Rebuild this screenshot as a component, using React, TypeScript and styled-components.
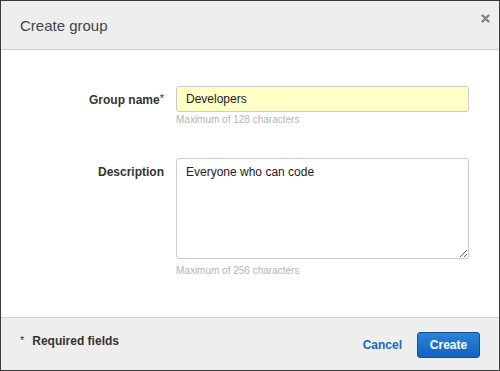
import styled, { createGlobalStyle } from "styled-components";

const GlobalStyle = createGlobalStyle`
	html, body {
		margin: 0;
		padding: 0;
		background: #ffffff;
	}
	body {
		font-family: "Liberation Sans", Arial, sans-serif;
	}
`;

const Dialog = styled.div`
	box-sizing: border-box;
	width: 500px;
	height: 371px;
	border: 1px solid #3a3a3a;
	display: flex;
	flex-direction: column;
	background: #ffffff;
`;

const Header = styled.div`
	box-sizing: border-box;
	height: 49px;
	flex-shrink: 0;
	display: flex;
	justify-content: space-between;
	align-items: flex-start;
	padding: 15px 9px 0 19px;
	background: #eeeeee;
	border-bottom: 1px solid #cccccc;
`;

const Title = styled.h1`
	margin: 0;
	font-size: 15px;
	font-weight: normal;
	color: #444444;
	line-height: 20px;
`;

const CloseButton = styled.button`
	border: none;
	background: transparent;
	padding: 0;
	margin-top: -3px;
	width: 10px;
	height: 10px;
	display: flex;
	align-items: center;
	justify-content: center;
	cursor: pointer;
`;

const Body = styled.div`
	flex: 1;
	display: flex;
	flex-direction: column;
	gap: 33px;
	padding: 36px 31px 0 0;
`;

const Row = styled.div`
	display: grid;
	grid-template-columns: 163px 1fr;
	column-gap: 12px;
`;

const Label = styled.label`
	text-align: right;
	font-size: 12px;
	font-weight: bold;
	color: #333333;
	padding-top: 7px;
`;

const Required = styled.span`
	font-weight: normal;
	font-size: 11px;
	vertical-align: top;
	position: relative;
	top: -1px;
`;

const Field = styled.div`
	display: flex;
	flex-direction: column;
	gap: 2px;
`;

const TextInput = styled.input`
	box-sizing: border-box;
	width: 293px;
	height: 26px;
	padding: 0 9px;
	font-family: inherit;
	font-size: 12px;
	color: #222222;
	background: #ffffc6;
	border: 1px solid #cccccc;
	border-radius: 3px;
	outline: none;
`;

const TextArea = styled.textarea`
	box-sizing: border-box;
	width: 293px;
	height: 101px;
	margin: 0 0 4px;
	padding: 6px 9px;
	font-family: inherit;
	font-size: 12px;
	line-height: 15px;
	color: #222222;
	background: #ffffff;
	border: 1px solid #cccccc;
	border-radius: 3px;
	outline: none;
	resize: vertical;
`;

const Hint = styled.span`
	font-size: 10px;
	color: #b5b5b5;
`;

const Footer = styled.div`
	box-sizing: border-box;
	height: 53px;
	flex-shrink: 0;
	display: flex;
	align-items: center;
	justify-content: space-between;
	padding: 0 19px 0 19px;
	background: #eeeeee;
	border-top: 1px solid #d5d5d5;
`;

const RequiredNote = styled.div`
	display: flex;
	gap: 8px;
	align-self: flex-start;
	margin-top: 16px;
	font-size: 12px;
	font-weight: bold;
	color: #333333;
`;

const Star = styled.span`
	font-weight: normal;
	font-size: 11px;
`;

const Actions = styled.div`
	display: flex;
	align-items: center;
	gap: 15px;
`;

const LinkButton = styled.button`
	border: none;
	background: transparent;
	padding: 0;
	margin-top: 2px;
	font-family: inherit;
	font-size: 12px;
	font-weight: bold;
	color: #1a6bbf;
	cursor: pointer;
`;

const PrimaryButton = styled.button`
	box-sizing: border-box;
	width: 63px;
	height: 26px;
	margin-top: 1px;
	font-family: inherit;
	font-size: 12px;
	font-weight: bold;
	color: #ffffff;
	background: linear-gradient(#2c82d8, #1262c0);
	border: 1px solid #0e4f99;
	border-radius: 3px;
	cursor: pointer;
`;

export default function App() {
	return (
		<>
			<GlobalStyle />
			<Dialog>
				<Header>
					<Title>Create group</Title>
					<CloseButton aria-label="Close">
						<svg width="9" height="9" viewBox="0 0 9 9">
							<path
								d="M1.5 1.5 L7.5 7.5 M7.5 1.5 L1.5 7.5"
								stroke="#808080"
								strokeWidth="2.4"
								strokeLinecap="round"
							/>
						</svg>
					</CloseButton>
				</Header>

				<Body>
					<Row>
						<Label>
							Group name<Required>*</Required>
						</Label>
						<Field>
							<TextInput defaultValue="Developers" />
							<Hint>Maximum of 128 characters</Hint>
						</Field>
					</Row>
					<Row>
						<Label>Description</Label>
						<Field>
							<TextArea defaultValue="Everyone who can code" />
							<Hint>Maximum of 256 characters</Hint>
						</Field>
					</Row>
				</Body>

				<Footer>
					<RequiredNote>
						<Star>*</Star>
						Required fields
					</RequiredNote>
					<Actions>
						<LinkButton>Cancel</LinkButton>
						<PrimaryButton>Create</PrimaryButton>
					</Actions>
				</Footer>
			</Dialog>
		</>
	);
}
